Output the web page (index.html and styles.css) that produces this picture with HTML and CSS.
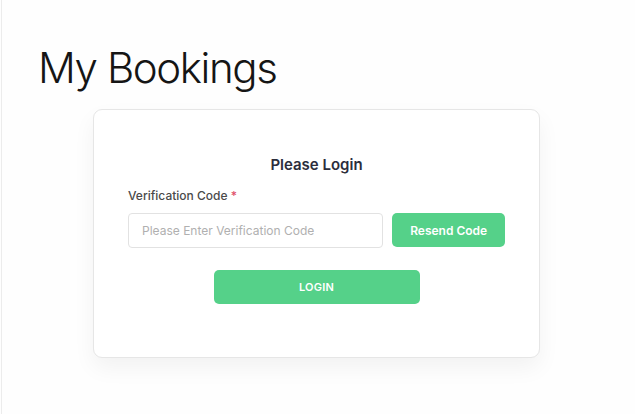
FILE: index.html
```html
<!DOCTYPE html>
<html>
<head>
<meta charset="utf-8">
<link rel="stylesheet" href="styles.css">
</head>
<body>
<div class="page">
  <h1 class="title">My Bookings</h1>
  <div class="card">
    <h2 class="card-title">Please Login</h2>
    <label class="label">Verification Code <span class="req">*</span></label>
    <div class="row">
      <input class="input" type="text" placeholder="Please Enter Verification Code">
      <button class="btn btn-resend">Resend Code</button>
    </div>
    <div class="center">
      <button class="btn btn-login">LOGIN</button>
    </div>
  </div>
</div>
</body>
</html>
```
FILE: styles.css
```css
html, body {
  margin: 0;
  padding: 0;
  background: #fefefe;
}
.page {
  margin-left: 1px;
  border-left: 1px solid #ececec;
  height: 414px;
  box-sizing: border-box;
  padding-top: 38px;
  font-family: "Inter", "Liberation Sans", sans-serif;
}
.title {
  margin: 0 0 0 36px;
  font-weight: 300;
  font-size: 42px;
  line-height: 60px;
  color: #151515;
  letter-spacing: -1.4px;
}
.card {
  margin: 11px 0 0 91px;
  width: 447px;
  height: 249px;
  box-sizing: border-box;
  background: #fff;
  border: 1px solid #e6e6e6;
  border-radius: 9px;
  box-shadow: 0 10px 22px rgba(0,0,0,0.05);
  padding: 45px 34px 0 34px;
}
.card-title {
  margin: 0;
  text-align: center;
  font-size: 15px;
  font-weight: 600;
  color: #2b2d3c;
  line-height: 20px;
}
.label {
  display: block;
  margin-top: 13px;
  font-size: 12px;
  font-weight: 500;
  color: #4a4a4a;
  line-height: 16px;
}
.req { color: #e0506a; }
.row {
  display: flex;
  gap: 9px;
  margin-top: 9px;
}
.input {
  width: 256px;
  height: 35px;
  box-sizing: border-box;
  border: 1px solid #e2e2e2;
  border-radius: 4px;
  padding: 0 13px;
  font-family: inherit;
  font-size: 12px;
  color: #333;
  background: #fff;
  outline: none;
}
.input::placeholder { color: #b0b0b0; }
.btn {
  border: none;
  background: #55d189;
  color: #fff;
  font-family: inherit;
  font-weight: 600;
  border-radius: 5px;
  cursor: pointer;
}
.btn-resend {
  width: 113px;
  height: 34px;
  font-size: 12px;
}
.center {
  display: flex;
  justify-content: center;
  margin-top: 22px;
}
.btn-login {
  width: 206px;
  height: 34px;
  font-size: 11px;
  letter-spacing: 0.2px;
}
```
